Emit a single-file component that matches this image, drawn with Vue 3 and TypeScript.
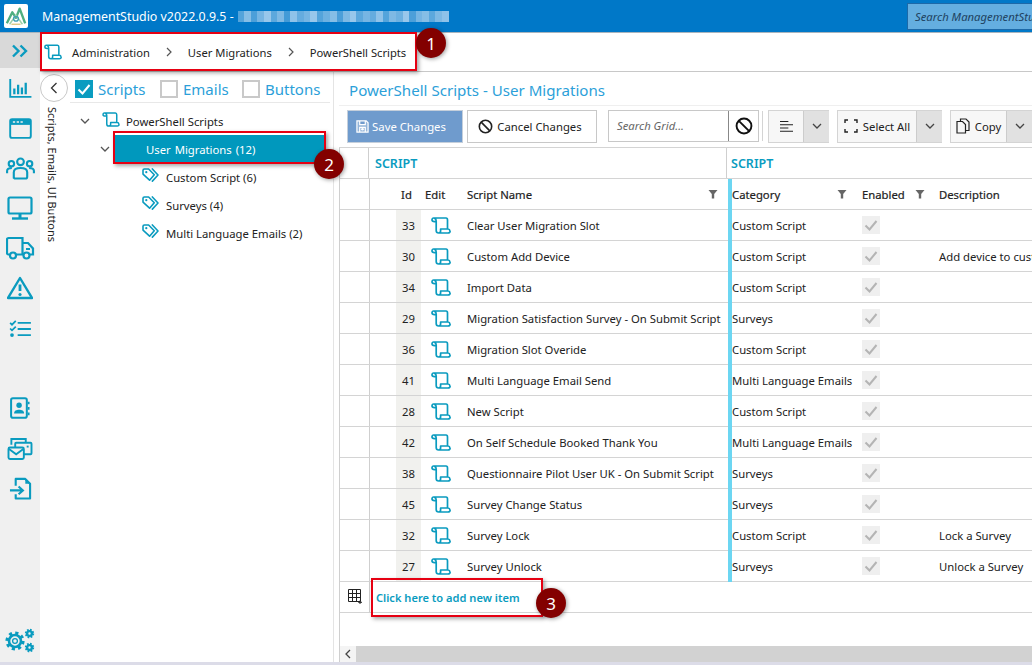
<script setup lang="ts">
interface Row { id: number; name: string; cat: string; desc: string }
const rows: Row[] = [
  { id: 33, name: 'Clear User Migration Slot', cat: 'Custom Script', desc: '' },
  { id: 30, name: 'Custom Add Device', cat: 'Custom Script', desc: 'Add device to custom' },
  { id: 34, name: 'Import Data', cat: 'Custom Script', desc: '' },
  { id: 29, name: 'Migration Satisfaction Survey - On Submit Script', cat: 'Surveys', desc: '' },
  { id: 36, name: 'Migration Slot Overide', cat: 'Custom Script', desc: '' },
  { id: 41, name: 'Multi Language Email Send', cat: 'Multi Language Emails', desc: '' },
  { id: 28, name: 'New Script', cat: 'Custom Script', desc: '' },
  { id: 42, name: 'On Self Schedule Booked Thank You', cat: 'Multi Language Emails', desc: '' },
  { id: 38, name: 'Questionnaire Pilot User UK - On Submit Script', cat: 'Surveys', desc: '' },
  { id: 45, name: 'Survey Change Status', cat: 'Surveys', desc: '' },
  { id: 32, name: 'Survey Lock', cat: 'Custom Script', desc: 'Lock a Survey' },
  { id: 27, name: 'Survey Unlock', cat: 'Surveys', desc: 'Unlock a Survey' },
]
const children = ['Custom Script (6)', 'Surveys (4)', 'Multi Language Emails (2)']
const mosaic = [.5,.8,.45,.7,.9,.55,.75,.4,.85,.6,.7,.9,.5,.65,.8,.45,.75,.9,.55,.7,.6,.85,.5,.75,.65,.9,.45,.7,.8,.55,.75,.85]
</script>

<template>
  <div class="app">
    <svg class="defs" width="0" height="0" aria-hidden="true">
      <symbol id="scroll" viewBox="0 0 20 17">
        <path d="M2.6 1H15C16 1 16.5 1.8 16.5 3V12M2.6 1C1.5 1 1 2 1 3C1 4 2 4.6 3.5 4.6H5.2M3.8 1.4C4.9 2 5.2 3 5.2 4V13.6C5.2 15 6.2 16 7.6 16H17C18.5 16 19.3 15 19 14C18.8 12.8 18 12 17 12H9.6V14C9.6 15 9 16 7.6 16" fill="none" stroke="currentColor" stroke-width="1.7" stroke-linejoin="round" stroke-linecap="round"/>
      </symbol>
      <symbol id="tag" viewBox="0 0 18 16">
        <path d="M1 2.5A1.5 1.5 0 0 1 2.5 1H7L13 7.2 8 13 1 6.5Z M11 1 17 7.5 11 14" fill="none" stroke="currentColor" stroke-width="1.7" stroke-linejoin="round" stroke-linecap="round"/>
        <circle cx="4.5" cy="4.5" r="1.2" fill="currentColor"/>
      </symbol>
      <symbol id="chev" viewBox="0 0 10 6">
        <path d="M1 1 5 5 9 1" fill="none" stroke="currentColor" stroke-width="1.3"/>
      </symbol>
      <symbol id="funnel" viewBox="0 0 10 10">
        <path d="M0.5 1H9.5L6.2 5V9.5H3.8V5Z" fill="currentColor"/>
      </symbol>
      <symbol id="check" viewBox="0 0 18 18">
        <path d="M3.5 9.5 7.5 13.5 14.5 5" fill="none" stroke="currentColor" stroke-width="2"/>
      </symbol>
      <symbol id="ban" viewBox="0 0 16 16">
        <circle cx="8" cy="8" r="6.6" fill="none" stroke="currentColor" stroke-width="1.7"/>
        <path d="M3.4 3.4 12.6 12.6" stroke="currentColor" stroke-width="1.7"/>
      </symbol>
    </svg>

    <header class="titlebar">
      <div class="logo">
        <svg viewBox="0 0 24 24" width="22" height="22">
          <path d="M2 20 8 8 12 14 16 4 22 20" fill="none" stroke="#4fae80" stroke-width="2.6" stroke-linejoin="round"/>
          <path d="M5 21 12 11 19 21" fill="none" stroke="#9fd0a8" stroke-width="1.6"/>
          <path d="M7 21H17" stroke="#d9c27a" stroke-width="1.4"/>
          <circle cx="12" cy="15" r="2.6" fill="none" stroke="#3f9fb5" stroke-width="1.5"/>
        </svg>
      </div>
      <span class="apptitle">ManagementStudio v2022.0.9.5 -</span>
      <div class="blur">
        <i v-for="(o, i) in mosaic" :key="i" :style="{ opacity: o }"></i>
      </div>
      <div class="topsearch">Search ManagementStudio</div>
    </header>

    <div class="body">
      <nav class="rail">
        <div class="railtop">
          <svg viewBox="0 0 18 14" width="18" height="14"><path d="M2 1.5 7.5 7 2 12.5M9.5 1.5 15 7 9.5 12.5" fill="none" stroke="currentColor" stroke-width="2.4"/></svg>
        </div>
        <div class="ri"><svg viewBox="0 0 24 20" width="23" height="19"><path d="M1.2 0V18.8H23.5" fill="none" stroke="currentColor" stroke-width="2"/><path d="M5.5 16V10M9.5 16V6M13.5 16V9M17.5 16V4" stroke="currentColor" stroke-width="2.4"/></svg></div>
        <div class="ri"><svg viewBox="0 0 24 22" width="23" height="21"><rect x="1.2" y="1.2" width="21.6" height="19.6" rx="2" fill="none" stroke="currentColor" stroke-width="2"/><rect x="1.2" y="1.2" width="21.6" height="6" fill="currentColor"/><path d="M4 4.2H6.4M8 4.2H10.4M12 4.2H14.4" stroke="#f0f0f0" stroke-width="1.6"/></svg></div>
        <div class="ri"><svg viewBox="0 0 30 24" width="29" height="23"><g fill="none" stroke="currentColor" stroke-width="2.2"><circle cx="15" cy="5" r="3.5"/><circle cx="5.5" cy="7" r="2.8"/><circle cx="24.5" cy="7" r="2.8"/><path d="M8 22.5V16C8 13 11 11.5 15 11.5S22 13 22 16V20.5A2 2 0 0 1 20 22.5H10A2 2 0 0 1 8 20.5Z"/><path d="M1 17V14.5C1 12.5 3 11.5 6 11.5M29 17V14.5C29 12.5 27 11.5 24 11.5"/></g></svg></div>
        <div class="ri"><svg viewBox="0 0 26 24" width="26" height="24"><rect x="1.5" y="1.5" width="23" height="16" rx="1.5" fill="none" stroke="currentColor" stroke-width="2.2"/><path d="M13 18V22" stroke="currentColor" stroke-width="3"/><path d="M5 22.5H21" stroke="currentColor" stroke-width="2.4"/></svg></div>
        <div class="ri"><svg viewBox="0 0 29 24" width="29" height="24"><g fill="none" stroke="currentColor" stroke-width="2.2"><path d="M3.5 18.5H2.4A1.4 1.4 0 0 1 1 17V3.5A1.5 1.5 0 0 1 2.5 2H16.5V18.5H10"/><path d="M16.5 7H22L27 12.5V18.5H24"/><circle cx="7" cy="19.5" r="3"/><circle cx="20.5" cy="19.5" r="3"/></g><path d="M20 13H24" stroke="currentColor" stroke-width="2"/></svg></div>
        <div class="ri"><svg viewBox="0 0 26 24" width="26" height="24"><path d="M13 2 25 22H1Z" fill="none" stroke="currentColor" stroke-width="2.4" stroke-linejoin="round"/><path d="M13 8.5V15" stroke="currentColor" stroke-width="2.8"/><circle cx="13" cy="18.5" r="1.6" fill="currentColor"/></svg></div>
        <div class="ri"><svg viewBox="0 0 24 18" width="23" height="17"><path d="M1 3 3 5 7 1M1 9 3 11 7 7" fill="none" stroke="currentColor" stroke-width="1.8"/><circle cx="3" cy="16" r="2" fill="currentColor"/><path d="M9 3H23M9 9.5H23M9 16H23" stroke="currentColor" stroke-width="2"/></svg></div>
        <div class="ri gap"><svg viewBox="0 0 22 24" width="20" height="22"><rect x="1.2" y="1.2" width="17.3" height="21.6" rx="2" fill="none" stroke="currentColor" stroke-width="2.2"/><circle cx="10" cy="9" r="3" fill="currentColor"/><path d="M4.5 18C4.5 15 7 14 10 14S15.5 15 15.5 18Z" fill="currentColor"/><path d="M20.5 5V8M20.5 11V14M20.5 17V20" stroke="currentColor" stroke-width="2"/></svg></div>
        <div class="ri"><svg viewBox="0 0 26 24" width="26" height="23"><g fill="none" stroke="currentColor" stroke-width="2"><path d="M4 8V2H19V6"/><rect x="8" y="6" width="17" height="12" rx="1"/><path d="M20 10H22"/><rect x="1" y="11" width="16" height="12" rx="1.5" fill="#f0f0f0"/><path d="M1.5 12.5 9 18 16.5 12.5"/></g></svg></div>
        <div class="ri"><svg viewBox="0 0 24 24" width="23" height="23"><path d="M7 9V2H17L22 7V22.5H7V18" fill="none" stroke="currentColor" stroke-width="2.2" stroke-linejoin="round"/><path d="M17 2V7H22Z" fill="currentColor"/><path d="M1 14H14M10 10 14.5 14 10 18" fill="none" stroke="currentColor" stroke-width="2.2"/></svg></div>
        <div class="ri gear">
          <svg viewBox="0 0 30 26" width="30" height="26">
            <g fill="none" stroke="currentColor">
              <circle cx="10" cy="13" r="8" stroke-width="3.2" stroke-dasharray="3.1 3.18"/>
              <circle cx="10" cy="13" r="6" stroke-width="2.6"/>
              <circle cx="10" cy="13" r="2.4" stroke-width="1.3"/>
              <circle cx="24.5" cy="5.5" r="3.6" stroke-width="2.2" stroke-dasharray="1.6 1.23"/>
              <circle cx="24.5" cy="5.5" r="2.4" stroke-width="2.4"/>
              <circle cx="24.5" cy="19.5" r="3.6" stroke-width="2.2" stroke-dasharray="1.6 1.23"/>
              <circle cx="24.5" cy="19.5" r="2.4" stroke-width="2.4"/>
            </g>
          </svg>
        </div>
      </nav>

      <div class="content">
        <div class="crumbs">
          <svg class="crumbicon"><use href="#scroll"/></svg>
          <span>Administration</span>
          <svg class="sep" viewBox="0 0 6 10"><path d="M1 1 5 5 1 9" fill="none" stroke="currentColor" stroke-width="1.2"/></svg>
          <span>User Migrations</span>
          <svg class="sep" viewBox="0 0 6 10"><path d="M1 1 5 5 1 9" fill="none" stroke="currentColor" stroke-width="1.2"/></svg>
          <span>PowerShell Scripts</span>
        </div>

        <div class="split">
          <aside class="side">
            <div class="sidestrip">
              <button class="collapse"><svg viewBox="0 0 8 12" width="8" height="12"><path d="M6.5 1 1.5 6 6.5 11" fill="none" stroke="#333" stroke-width="1.3"/></svg></button>
              <div class="vert">Scripts, Emails, UI Buttons</div>
            </div>
            <div class="treepane">
              <div class="filters">
                <label class="f"><span class="cb on"><svg width="18" height="18"><use href="#check"/></svg></span>Scripts</label>
                <label class="f f2"><span class="cb"></span>Emails</label>
                <label class="f f3"><span class="cb"></span>Buttons</label>
              </div>
              <div class="tree">
                <div class="t t0">
                  <svg class="tchev"><use href="#chev"/></svg>
                  <svg class="tscroll"><use href="#scroll"/></svg>
                  <span>PowerShell Scripts</span>
                </div>
                <div class="t t1">
                  <svg class="tchev"><use href="#chev"/></svg>
                  <div class="sel">User Migrations&nbsp;(12)</div>
                </div>
                <div v-for="c in children" :key="c" class="t t2">
                  <svg class="ttag"><use href="#tag"/></svg>
                  <span>{{ c }}</span>
                </div>
              </div>
            </div>
          </aside>

          <main class="main">
            <h1 class="title">PowerShell Scripts - User Migrations</h1>
            <div class="toolbar">
              <button class="btn save">
                <svg viewBox="0 0 14 14" width="13" height="13"><path d="M1 1H11L13 3V13H1Z M4 1V5H10V1 M4 13V8H10V13" fill="#fff" fill-opacity=".25" stroke="#fff" stroke-width="1.3"/><circle cx="7" cy="10" r="1.4" fill="#fff"/></svg>
                Save Changes
              </button>
              <button class="btn cancel"><svg width="15" height="15"><use href="#ban"/></svg>Cancel Changes</button>
              <div class="search">
                <span class="ph">Search Grid...</span>
                <span class="clear"><svg width="18" height="18"><use href="#ban"/></svg></span>
              </div>
              <span class="vsep"></span>
              <div class="split-btn sb1">
                <span class="sb-main"><svg viewBox="0 0 16 14" width="15" height="13"><path d="M1 1.5H10M1 5H15M1 8.5H10M1 12H15" stroke="#222" stroke-width="1.1"/></svg></span>
                <span class="sb-arrow"><svg width="10" height="6"><use href="#chev"/></svg></span>
              </div>
              <div class="split-btn sb2">
                <span class="sb-main"><svg viewBox="0 0 14 14" width="14" height="14"><path d="M1 4V1H4M10 1H13V4M13 10V13H10M4 13H1V10" fill="none" stroke="#222" stroke-width="1.4"/></svg>Select All</span>
                <span class="sb-arrow"><svg width="10" height="6"><use href="#chev"/></svg></span>
              </div>
              <div class="split-btn sb3">
                <span class="sb-main"><svg viewBox="0 0 14 16" width="14" height="16"><path d="M4.5 3V1H10L13 4V12.5H9.5M1 3.5H6.5L9.5 6.5V15H1Z" fill="none" stroke="#222" stroke-width="1.2"/></svg>Copy</span>
                <span class="sb-arrow"><svg width="10" height="6"><use href="#chev"/></svg></span>
              </div>
            </div>

            <div class="grid">
              <div class="groups">
                <div class="g-ind"></div>
                <div class="g1">SCRIPT</div>
                <div class="g2">SCRIPT</div>
              </div>
              <div class="row head">
                <div class="c ind"></div>
                <div class="c id">Id</div>
                <div class="c edit">Edit</div>
                <div class="c name">Script Name<svg class="fn"><use href="#funnel"/></svg></div>
                <div class="bar"></div>
                <div class="c cat">Category<svg class="fn"><use href="#funnel"/></svg></div>
                <div class="c en">Enabled<svg class="fn"><use href="#funnel"/></svg></div>
                <div class="c desc">Description</div>
              </div>
              <div v-for="r in rows" :key="r.id" class="row">
                <div class="c ind"></div>
                <div class="c id idv">{{ r.id }}</div>
                <div class="c edit"><svg class="ed"><use href="#scroll"/></svg></div>
                <div class="c name">{{ r.name }}</div>
                <div class="bar"></div>
                <div class="c cat">{{ r.cat }}</div>
                <div class="c en"><span class="dis"><svg width="18" height="18"><use href="#check"/></svg></span></div>
                <div class="c desc">{{ r.desc }}</div>
              </div>
              <div class="addrow">
                <div class="addind">
                  <svg viewBox="0 0 16 16" width="16" height="16"><path d="M1.5 1.5H13.5V13.5H1.5ZM1.5 5.5H13.5M1.5 9.5H13.5M5.5 1.5V13.5M9.5 1.5V13.5" fill="none" stroke="#222" stroke-width="1"/><path d="M13 12.5V16M11.2 14.3H15" stroke="#222" stroke-width="1"/></svg>
                </div>
                <span class="addtext">Click here to add new item</span>
              </div>
              <div class="gridfill"></div>
              <div class="hscroll">
                <span class="hs-btn"><svg viewBox="0 0 6 10" width="6" height="10"><path d="M5 1 1 5 5 9" fill="none" stroke="#444" stroke-width="1.3"/></svg></span>
              </div>
            </div>
          </main>
        </div>
      </div>
    </div>
    <div class="statusline"></div>

    <div class="box b1"></div><div class="dot d1">1</div>
    <div class="box b2"></div><div class="dot d2">2</div>
    <div class="box b3"></div><div class="dot d3">3</div>
  </div>
</template>

<style>
html, body { margin: 0; background: #fff; }
</style>

<style scoped>
* { box-sizing: border-box; }
.defs { position: absolute; }
.app { position: relative; width: 1032px; height: 665px; overflow: hidden; display: flex; flex-direction: column; font: 11.3px "Noto Sans", "Open Sans", sans-serif; color: #222; background: #fff; }
button { font: inherit; }

.titlebar { height: 33px; flex: none; background: #0078c8; border-bottom: 1px solid #a9b4bd; display: flex; align-items: center; color: #fff; position: relative; }
.logo { width: 24px; height: 24px; margin-left: 4px; background: #fff; border-radius: 2px; display: flex; align-items: center; justify-content: center; }
.apptitle { margin-left: 14px; font-size: 12.4px; }
.blur { margin-left: 4px; display: flex; height: 11px; width: 211px; }
.blur i { flex: 1; background: #a8cfee; }
.topsearch { margin-left: auto; width: 125px; height: 27px; background: #64aee0; border: 1px solid #1c69a8; border-right: none; padding-left: 7px; font-style: italic; color: #20425f; line-height: 25px; white-space: nowrap; overflow: hidden; font-size: 11.3px; }

.body { flex: 1; display: flex; min-height: 0; }
.rail { width: 40px; flex: none; background: #f0f0f0; display: flex; flex-direction: column; color: #0a9bbf; padding-bottom: 1px; }
.railtop { height: 35px; background: #d9d9d9; display: flex; align-items: center; justify-content: center; flex: none; }
.ri { height: 40px; flex: none; display: flex; align-items: center; justify-content: center; }
.ri.gap { margin-top: 40px; }
.ri.gear { margin-top: auto; }

.content { flex: 1; min-width: 0; display: flex; flex-direction: column; }
.crumbs { height: 39px; flex: none; border-bottom: 1px solid #c8c8c8; display: flex; align-items: center; padding-left: 4px; white-space: nowrap; font-size: 11.2px; }
.crumbicon { width: 18px; height: 16px; color: #0a9bbf; margin-right: 10px; }
.sep { width: 6px; height: 10px; color: #555; margin: 0 16px; }

.split { flex: 1; display: flex; min-height: 0; }
.side { width: 294px; flex: none; display: flex; border-right: 1px solid #e4e4e4; }
.sidestrip { width: 30px; flex: none; position: relative; }
.collapse { position: absolute; left: 0; top: 2px; width: 28px; height: 28px; border-radius: 50%; border: 1px solid #c8c8c8; background: #fff; display: flex; align-items: center; justify-content: center; padding: 0; }
.vert { position: absolute; left: 5px; top: 35px; writing-mode: vertical-rl; font-size: 11px; white-space: nowrap; }
.treepane { flex: 1; min-width: 0; }
.filters { height: 31px; margin-right: 3px; border-bottom: 1px solid #e8e8e8; display: flex; align-items: center; font-size: 15px; color: #2c9fd9; padding-left: 5px; padding-top: 4px; }
.f { display: flex; align-items: center; gap: 5px; white-space: nowrap; width: 85px; }
.f2 { width: 82px; }
.cb { width: 18px; height: 18px; border: 2px solid #c9c9c9; display: inline-block; flex: none; }
.cb.on { background: #0a9cc0; color: #fff; border: none; }
.tree { padding-top: 4px; position: relative; }
.t { height: 28px; display: flex; align-items: center; position: relative; white-space: nowrap; }
.tchev { width: 10px; height: 6px; color: #555; position: absolute; }
.t0 .tchev { left: 10px; }
.t1 .tchev { left: 30px; }
.tscroll { width: 18px; height: 15px; color: #0a9bbf; position: absolute; left: 32px; top: 5px; }
.t0 span { margin-left: 56px; }
.sel { margin-left: 45px; width: 210px; height: 28px; background: #0098bd; color: #fff; line-height: 30px; padding-left: 31px; word-spacing: 1px; }
.ttag { width: 17px; height: 15px; color: #0a9bbf; margin-left: 72px; margin-top: -4px; }
.t2 span { margin-left: 7px; }

.main { flex: 1; min-width: 0; margin-left: 5px; display: flex; flex-direction: column; overflow: hidden; }
.title { margin: 0; height: 34px; flex: none; font-weight: 400; font-size: 15.1px; line-height: 36px; color: #2c9fd9; padding-left: 10px; border-bottom: 1px solid #efefef; white-space: nowrap; }
.toolbar { height: 42px; flex: none; display: flex; align-items: center; padding-left: 8px; white-space: nowrap; border-bottom: 1px solid #d4d4d4; padding-bottom: 1px; }
.btn { height: 33px; display: flex; align-items: center; justify-content: center; gap: 3px; flex: none; padding: 0; }
.save { width: 116px; background: #6f9bcd; border: 1px solid #c5cfdb; color: #fff; padding-right: 8px; }
.cancel { width: 130px; margin-left: 4px; background: #fff; border: 1px solid #c8c8c8; color: #222; gap: 4px; padding-right: 4px; }
.search { width: 151px; height: 32px; margin-left: 11px; border: 1px solid #c8c8c8; display: flex; flex: none; }
.ph { flex: 1; font-style: italic; color: #666; padding-left: 8px; line-height: 30px; }
.clear { width: 30px; border-left: 1px solid #888; display: flex; align-items: center; justify-content: center; color: #111; }
.vsep { width: 1px; height: 30px; background: #d4d4d4; margin: 0 5px 0 3px; flex: none; }
.split-btn { display: flex; height: 33px; flex: none; border: 1px solid #d4d4d4; border-right: none; margin-right: 8px; }
.sb-main { display: flex; align-items: center; justify-content: center; gap: 5px; background: #f7f7f7; flex: 1; }
.sb-arrow { width: 26px; background: #e1e1e1; display: flex; align-items: center; justify-content: center; color: #444; border-left: 1px solid #ccc; flex: none; }
.sb1 { width: 61px; }
.sb2 { width: 105px; }
.sb3 { width: 82px; margin-right: 0; }

.grid { flex: 1; min-height: 0; display: flex; flex-direction: column; border-left: 1px solid #cfcfcf; }
.groups { height: 31px; flex: none; display: flex; border-bottom: 1px solid #d4d4d4; color: #0a9cc0; font-weight: 600; font-size: 12.5px; line-height: 32px; }
.g-ind { width: 29px; flex: none; border-right: 1px solid #cfcfcf; }
.g1 { width: 358px; flex: none; padding-left: 6px; border-right: 1px solid #cfcfcf; }
.g2 { padding-left: 4px; }
.row { height: 31px; flex: none; display: flex; border-bottom: 1px solid #d4d4d4; white-space: nowrap; }
.c { display: flex; align-items: center; flex: none; position: relative; overflow: hidden; }
.ind { width: 30px; border-right: 1px solid #cfcfcf; }
.id { width: 51px; padding-left: 26px; justify-content: center; }
.idv { background: linear-gradient(to right, #fff 26px, #f1f1ee 26px); }
.edit { width: 39px; justify-content: center; padding-left: 1px; }
.ed { width: 20px; height: 17px; color: #0a9bbf; }
.name { width: 268px; padding-left: 7px; }
.bar { width: 4px; flex: none; background: #6cd6f2; margin-bottom: -1px; }
.cat { width: 126px; }
.en { width: 77px; padding-left: 4px; }
.desc { flex: 1; padding-left: 4px; min-width: 0; }
.fn { position: absolute; width: 10px; height: 10px; color: #666; top: 10px; }
.name .fn { right: 10px; }
.cat .fn { right: 11px; }
.en .fn { left: 57px; }
.dis { width: 18px; height: 18px; background: #efefef; color: #b4b4b4; display: block; }
.head .c { -webkit-text-stroke: .2px #222; }
.head .id { padding-left: 22px; background: none; }
.head .edit { justify-content: flex-start; padding-left: 4px; }
.addrow { height: 31px; flex: none; display: flex; align-items: center; border-bottom: 1px solid #d4d4d4; }
.addind { width: 30px; border-right: 1px solid #cfcfcf; height: 100%; display: flex; align-items: center; justify-content: center; padding-left: 1px; padding-bottom: 2px; }
.addtext { color: #0a9cc0; font-weight: 600; font-size: 11.1px; margin-left: 6px; }
.gridfill { flex: 1; }
.hscroll { height: 16px; flex: none; background: #d2d2d2; }
.hs-btn { width: 16px; height: 16px; background: #f4f4f4; display: flex; align-items: center; justify-content: center; }
.statusline { height: 3px; flex: none; background: #dcdce8; }

.box { position: absolute; border: 2px solid #e60012; box-shadow: 2px 2px 4px rgba(0,0,0,.35); }
.b1 { left: 40px; top: 32px; width: 377px; height: 39px; }
.b2 { left: 113px; top: 131px; width: 213px; height: 33px; }
.b3 { left: 371px; top: 578px; width: 172px; height: 39px; }
.dot { position: absolute; width: 30px; height: 30px; border-radius: 50%; background: #830000; color: #fff; font-size: 17px; display: flex; align-items: center; justify-content: center; box-shadow: 1px 1px 4px rgba(0,0,0,.4); }
.d1 { left: 416px; top: 28px; }
.d2 { left: 314px; top: 149px; }
.d3 { left: 536px; top: 588px; }
</style>
